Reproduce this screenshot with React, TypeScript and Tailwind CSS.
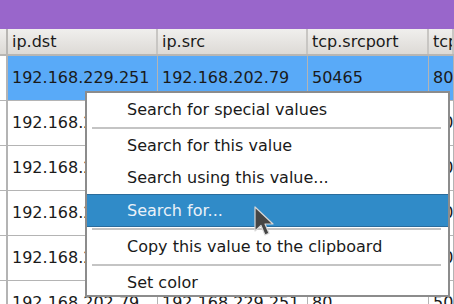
import React from "react";

const cols = ["w-[150px]", "w-[150px]", "w-[121px]", "flex-1"];

const rows = [
  ["192.168.229.251", "192.168.202.79", "50465", "80"],
  ["192.168.202.79", "192.168.229.251", "80", "50465"],
  ["192.168.202.79", "192.168.229.251", "80", "50465"],
  ["192.168.202.79", "192.168.229.251", "80", "50465"],
  ["192.168.202.79", "192.168.229.251", "80", "50465"],
  ["192.168.202.79", "192.168.229.251", "80", "50465"],
];

function Sep() {
  return <div className="ml-[5px] mr-[7px] my-[1px] h-[2px] bg-[#c4c4c4]" />;
}

function Item({ label, active }: { label: string; active?: boolean }) {
  return (
    <div
      className={
        active
          ? "h-[33px] pl-[40px] flex items-center bg-[#308bc8] border-y border-[#2a6c9c] text-[#eaf1f8]"
          : "h-[32px] pl-[40px] flex items-center text-[#1a1a1a]"
      }
    >
      {label}
    </div>
  );
}

export default function App() {
  return (
    <div className="relative w-[454px] h-[304px] overflow-hidden bg-white font-['DejaVu_Sans',sans-serif] text-[16px] text-[#1a1a1a]">
      <div className="h-[29px] bg-[#9966cb]" />
      {/* header */}
      <div className="flex h-[27px] bg-gradient-to-b from-[#f0efed] to-[#dddad6] border-b-2 border-[#b8b6b3]">
        <div className="w-[8px] border-r-2 border-[#b8b6b3]" />
        {["ip.dst", "ip.src", "tcp.srcport", "tcp.dstport"].map((h, i) => (
          <div
            key={h}
            className={`${cols[i]} pl-[4px] flex items-center border-r-2 border-[#c8c6c3] whitespace-nowrap overflow-hidden`}
          >
            {h}
          </div>
        ))}
      </div>
      {/* rows */}
      {rows.map((r, ri) => (
        <div
          key={ri}
          className={`flex h-[45px] border-b border-[#b4b4b4] ${ri === 0 ? "bg-[#59aaf8]" : "bg-white"}`}
        >
          <div className="w-[8px] border-r-2 border-[#b4b4b4] bg-white" />
          {r.map((c, ci) => (
            <div
              key={ci}
              className={`${cols[ci]} pl-[4px] flex items-center border-r border-[#b4b4b4] whitespace-nowrap overflow-hidden`}
            >
              {c}
            </div>
          ))}
        </div>
      ))}

      {/* context menu */}
      <div className="absolute left-[85px] top-[91px] w-[365px] h-[206px] bg-white border-2 border-[#8c8c8c] pt-[1px]">
        <Item label="Search for special values" />
        <Sep />
        <Item label="Search for this value" />
        <Item label="Search using this value..." />
        <Item label="Search for..." active />
        <Sep />
        <Item label="Copy this value to the clipboard" />
        <Sep />
        <Item label="Set color" />
      </div>

      {/* mouse pointer */}
      <svg
        className="absolute left-[252px] top-[205px]"
        width="24"
        height="34"
        viewBox="0 0 24 34"
      >
        <path
          d="M3 2 L3 26 L9 20.5 L13 30 L17 28.2 L13 19 L21 19 Z"
          fill="#454545"
          stroke="#d8d8d8"
          strokeWidth="1.2"
          strokeLinejoin="round"
        />
      </svg>
    </div>
  );
}
